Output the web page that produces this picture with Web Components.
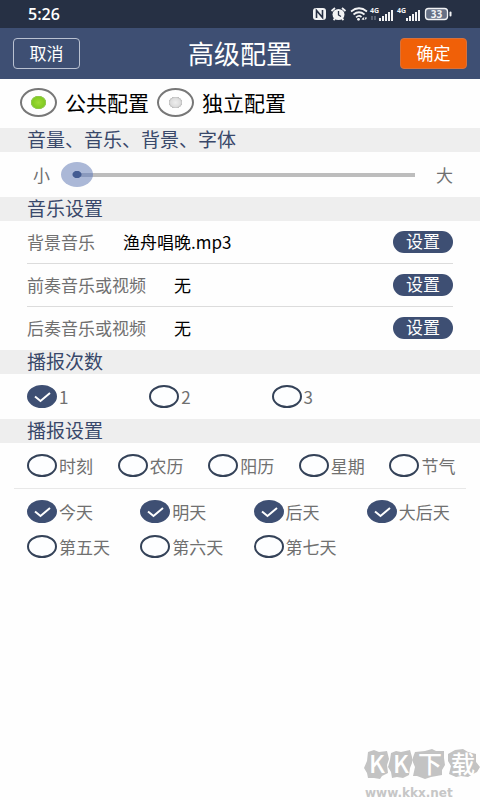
<!DOCTYPE html>
<html lang="zh-CN">
<head>
<meta charset="utf-8">
<meta name="viewport" content="width=device-width, initial-scale=1">
<title>高级配置</title>
<style>
html { --navy: #3e4f73; --ink: #39486a; --muted: #707070; --band: #eeeeee; --edge: 27px; }
body { margin: 0; background: #fefefe; font-family: "Noto Sans CJK SC", "Noto Sans", sans-serif; font-size: 17px; line-height: 22px; color: var(--muted); }
</style>
</head>
<body>
<settings-page></settings-page>
<script>
class Base extends HTMLElement {
  connectedCallback() {
    if (this.shadowRoot) return;
    this.attachShadow({ mode: 'open' }).innerHTML =
      '<style>*{box-sizing:border-box}button,input{font:inherit;margin:0}:host{display:block;box-sizing:border-box}</style>' + this.render();
  }
}

customElements.define('status-bar', class extends Base {
  render() {
    const bars = x => [0, 1, 2, 3, 4].map(i =>
      `<rect x="${x + i * 3}" y="${14 - i * 2}" width="2" height="${3 + i * 2}"/>`).join('');
    return `<style>
      :host { display: flex; justify-content: space-between; align-items: center; height: 28px; padding: 0 28px; background: #263044; color: #fff; }
      time { font: 600 16px/20px "Open Sans", sans-serif; }
      svg { display: block; }
      text { font-family: "Open Sans", sans-serif; font-weight: 700; }
    </style>
    <time>5:26</time>
    <svg width="140" height="20" viewBox="0 0 140 20" fill="#f2f3f5" aria-label="状态">
      <rect x="1" y="4" width="13" height="12" rx="3"/>
      <path d="M4.500 14V6.500L10.500 13.500V6" fill="none" stroke="#263044" stroke-width="1.600"/>
      <ellipse cx="26.500" cy="10.500" rx="6" ry="5.500"/>
      <path d="M19.500 7l3.500-3M33.500 7l-3.500-3M21.500 16l1.500-1.500M31.500 16l-1.500-1.500" stroke="#f2f3f5" stroke-width="1.800"/>
      <path d="M26.500 7v4l2.500 1.500" fill="none" stroke="#263044" stroke-width="1.300"/>
      <path d="M39 7.500q8-6.500 16 0M41.500 10.500q5.500-4.500 11 0M44 13.300q3-2.500 5.500-.3" fill="none" stroke="#f2f3f5" stroke-width="1.700"/>
      <circle cx="46.500" cy="15.300" r="1.400"/>
      <path d="M49.500 15.500l2-2.500 1 3zM52.500 13.500l2.500 0-1.200 2.500z"/>
      <text x="58" y="9" font-size="7">4G</text><path d="M60 12v4M63 12v4" stroke="#8890a0"/>
      ${bars(67)}
      <text x="85" y="9" font-size="7">4G</text>${bars(94)}
      <rect x="113.500" y="4.500" width="22" height="11" rx="3" fill="#667085" stroke="#f2f3f5" stroke-width="1.300"/>
      <rect x="137.500" y="7.500" width="2" height="5" rx="1"/>
      <text x="124.500" y="13.700" font-size="10" text-anchor="middle">33</text>
    </svg>`;
  }
});

customElements.define('title-bar', class extends Base {
  render() {
    return `<style>
      :host { display: flex; align-items: center; justify-content: space-between; height: 51px; padding: 0 13px; background: var(--navy); color: #fff; }
      h1 { margin: 0; padding-bottom: 2px; font-size: 26px; line-height: 32px; font-weight: 400; }
      button { width: 67px; height: 31px; padding: 0 0 2px; border: 1px solid #b9c1d1; border-radius: 4px; background: none; color: #fff; line-height: 22px; }
      .ok { background: #f06008; border-color: #d8713a; }
    </style>
    <button type="button">取消</button><h1><slot></slot></h1><button type="button" class="ok">确定</button>`;
  }
});

customElements.define('config-mode', class extends Base {
  render() {
    return `<style>
      :host { display: flex; align-items: center; gap: 8px; height: 49px; padding: 0 20px 3px; color: #000; font-size: 21px; line-height: 28px; }
      label { display: flex; align-items: center; gap: 8px; }
      input { appearance: none; width: 37px; height: 29px; border: 2px solid #777; border-radius: 50%;
        background: radial-gradient(ellipse 7px 6px, #eee, #ddd 70%, #bbb 95%, transparent 100%); }
      input:checked { background: radial-gradient(ellipse 8px 7px, #a0da38, #82cc22 75%, #96c85a 92%, transparent 100%); }
    </style>
    <label><input type="radio" name="mode" checked>公共配置</label>
    <label><input type="radio" name="mode">独立配置</label>`;
  }
});

customElements.define('section-title', class extends Base {
  render() {
    return `<style>
      :host { background: var(--band); color: var(--ink); }
      h2 { margin: 0; padding: 0 var(--edge) 2px; font-size: 19px; line-height: 22px; font-weight: 400; }
    </style><h2><slot></slot></h2>`;
  }
});

customElements.define('size-slider', class extends Base {
  render() {
    return `<style>
      :host { display: flex; align-items: center; height: 45px; padding: 0 27px 0 33px; }
      input { appearance: none; flex: 1; min-width: 0; height: 25px; margin: 0 5px 0 11px;
        background: linear-gradient(#bdbdbd, #bdbdbd) center / calc(100% - 32px) 4px no-repeat; }
      input::-webkit-slider-thumb { appearance: none; width: 32px; height: 25px; border-radius: 50%;
        background: radial-gradient(ellipse 5px 4px, #445c92 80%, transparent 100%), linear-gradient(#8a99bd, #8a99bd) right / 50% 4px no-repeat, #abb8d7; }
    </style>
    <span>小</span><input type="range" min="0" max="100" value="0" aria-label="大小"><span>大</span>`;
  }
});

customElements.define('media-row', class extends Base {
  render() {
    return `<style>
      :host { display: flex; align-items: center; gap: 28px; height: 43px; margin: 0 var(--edge); border-bottom: 1px solid #dcdcdc; }
      :host(:last-of-type) { border-bottom-color: transparent; }
      b { flex: 1; font-weight: 400; color: #000; }
      button { width: 60px; height: 22px; padding: 0 0 2px; border: 0; border-radius: 11px; background: var(--navy); color: #fff; line-height: 20px; }
    </style>
    <span>${this.getAttribute('label')}</span><b><slot></slot></b>
    <button type="button" aria-label="设置${this.getAttribute('label')}">设置</button>`;
  }
});

customElements.define('option-grid', class extends Base {
  render() {
    const type = this.getAttribute('type') || 'checkbox';
    const on = (this.getAttribute('checked') || '').split(' ');
    const items = this.getAttribute('options').split(' ').map(t =>
      `<label><span><input type="${type}" name="option" ${on.includes(t) ? 'checked' : ''}>
       <svg viewBox="0 0 30 23" width="30" height="23"><path d="M8 11.500l5.500 4.500 9.500-8"/></svg></span>${t}</label>`).join('');
    return `<style>
      :host { display: grid; grid-template-columns: var(--columns); row-gap: 12px; padding: 11px 0 11px var(--edge); }
      label { display: flex; align-items: center; gap: 2px; white-space: nowrap; }
      span { display: grid; }
      input, svg { grid-area: 1 / 1; }
      input { appearance: none; width: 30px; height: 23px; border: 2px solid #344258; border-radius: 50%; background: #fdfeff; }
      input:checked { border-color: var(--navy); background: var(--navy); }
      svg { display: none; pointer-events: none; fill: none; stroke: #fff; stroke-width: 2; }
      input:checked + svg { display: block; }
    </style>${items}`;
  }
});

customElements.define('site-mark', class extends Base {
  render() {
    return `<style>
      :host { align-self: flex-end; margin-top: auto; color: #c6c6c6; }
      svg { display: block; }
      a { display: block; padding-left: 2px; font: 700 12px/14px "DejaVu Sans", sans-serif; color: inherit; text-decoration: none; }
      text { font-family: "Noto Sans CJK SC", sans-serif; font-weight: 500; fill: #fff; }
    </style>
    <svg width="117" height="50" viewBox="363 736 117 50" fill="#c3c3c3" aria-label="KK下载">
      <path d="M368 752l6-2 5 2 8-1 2 8-2 6 1 8-6 3-2 3-6-1-6 0-1-5-3-5 3-7z"/>
      <path d="M391 753l5-2 5 1 9-2 2 7 0 6-2 5-1 7-6 3-6-1-5 1-1-6-3-5 2-7z"/>
      <path d="M415 752l10-1 7-2 4 2 8 0 0 7 1 7-3 5 0 5-11 2-6 2-8-3-4 0 2-9-3-7z"/>
      <path d="M448 754l7-4 8-1 5 3 8 2 0 8 4 5-3 5-4 2-5 3-7-1-5 1-7-3 2-8-3-5z"/>
      <text x="369" y="773" font-size="24">K</text><text x="393" y="773" font-size="24">K</text>
      <text x="418" y="773" font-size="24">下</text><text x="451" y="773" font-size="24">载</text>
    </svg>
    <a href="#">www.kkx.net</a>`;
  }
});

customElements.define('settings-page', class extends Base {
  render() {
    return `<style>
      :host { display: flex; flex-direction: column; min-height: 100vh; }
      main { display: block; }
      .three { --columns: repeat(3, 27%); }
      .five { --columns: repeat(5, 1fr); }
      .four { --columns: repeat(4, 1fr); }
      hr { margin: 0 14px; border: 0; border-top: 1px solid #e8e8e8; }
    </style>
    <status-bar></status-bar>
    <title-bar>高级配置</title-bar>
    <main>
      <config-mode></config-mode>
      <section-title>音量、音乐、背景、字体</section-title>
      <size-slider></size-slider>
      <section-title>音乐设置</section-title>
      <section>
        <media-row label="背景音乐">渔舟唱晚.mp3</media-row>
        <media-row label="前奏音乐或视频">无</media-row>
        <media-row label="后奏音乐或视频">无</media-row>
      </section>
      <section-title>播报次数</section-title>
      <option-grid class="three" type="radio" options="1 2 3" checked="1"></option-grid>
      <section-title>播报设置</section-title>
      <option-grid class="five" options="时刻 农历 阳历 星期 节气"></option-grid>
      <hr>
      <option-grid class="four" options="今天 明天 后天 大后天 第五天 第六天 第七天" checked="今天 明天 后天 大后天"></option-grid>
    </main>
    <site-mark></site-mark>`;
  }
});
</script>
</body>
</html>
